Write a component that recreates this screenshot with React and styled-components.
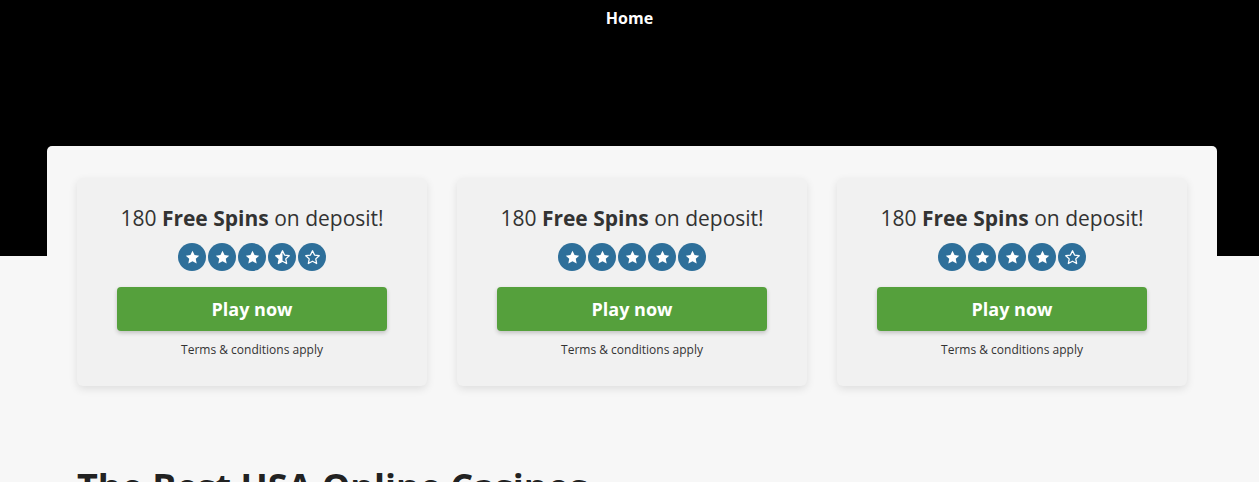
import React from 'react'
import styled, { createGlobalStyle } from 'styled-components'

const GlobalStyle = createGlobalStyle`
  body {
    margin: 0;
    background: #f7f7f7;
    font-family: "Open Sans", "Noto Sans", Arial, sans-serif;
    color: #333;
  }
`

const Hero = styled.header`
  background: #000;
  height: 256px;
`

const Nav = styled.nav`
  display: flex;
  justify-content: center;
  padding-top: 8px;
`

const NavLink = styled.a`
  color: #fff;
  font-weight: 700;
  font-size: 16px;
  line-height: 20px;
  text-decoration: none;
`

const Panel = styled.main`
  box-sizing: border-box;
  width: 1170px;
  margin: -110px 0 0 47px;
  padding: 32px 30px 0;
  background: #f7f7f7;
  border-radius: 5px 5px 0 0;
`

const Cards = styled.div`
  display: grid;
  grid-template-columns: repeat(3, 350px);
  gap: 30px;
`

const Card = styled.div`
  display: flex;
  flex-direction: column;
  align-items: center;
  padding: 28px 40px 28px;
  background: #f1f1f1;
  border-radius: 6px;
  box-shadow: 0 3px 8px rgba(0, 0, 0, 0.1);
`

const Offer = styled.p`
  margin: 0;
  font-size: 21px;
  line-height: 24px;
  color: #333;
  b {
    font-weight: 700;
  }
`

const Stars = styled.div`
  display: flex;
  gap: 2px;
  margin-top: 13px;
`

const StarBadge = styled.span`
  display: flex;
  align-items: center;
  justify-content: center;
  width: 28px;
  height: 28px;
  border-radius: 50%;
  background: #2e6f9a;
`

const PlayButton = styled.a`
  display: flex;
  align-items: center;
  justify-content: center;
  align-self: stretch;
  height: 44px;
  margin-top: 16px;
  background: #55a03c;
  border-radius: 4px;
  box-shadow: 0 2px 4px rgba(0, 0, 0, 0.2);
  color: #fff;
  font-weight: 700;
  font-size: 18px;
  text-decoration: none;
`

const Terms = styled.p`
  margin: 11px 0 0;
  font-size: 12px;
  line-height: 16px;
  color: #333;
`

const Heading = styled.h1`
  margin: 79px 0 0;
  font-size: 36px;
  line-height: 44px;
  font-weight: 700;
  color: #222;
`

const STAR = 'M12 2.5l2.9 6.1 6.6.8-4.9 4.5 1.3 6.6L12 17.2l-5.9 3.3 1.3-6.6-4.9-4.5 6.6-.8z'

const Star = ({ kind }) => (
  <StarBadge>
    <svg width="17" height="17" viewBox="0 0 24 24">
      <defs>
        <clipPath id="half-left">
          <rect x="0" y="0" width="12" height="24" />
        </clipPath>
      </defs>
      {kind === 'full' && <path d={STAR} fill="#fff" />}
      {kind !== 'full' && (
        <path d={STAR} fill="none" stroke="#fff" strokeWidth="1.8" strokeLinejoin="round" />
      )}
      {kind === 'half' && <path d={STAR} fill="#fff" clipPath="url(#half-left)" />}
    </svg>
  </StarBadge>
)

const ratings = [3.5, 5, 4]

const starKinds = (rating) =>
  [1, 2, 3, 4, 5].map((n) => (rating >= n ? 'full' : rating >= n - 0.5 ? 'half' : 'empty'))

export default function App() {
  return (
    <>
      <GlobalStyle />
      <Hero>
        <Nav>
          <NavLink href="#">Home</NavLink>
        </Nav>
      </Hero>
      <Panel>
        <Cards>
          {ratings.map((r, i) => (
            <Card key={i}>
              <Offer>
                180 <b>Free Spins</b> on deposit!
              </Offer>
              <Stars>
                {starKinds(r).map((k, j) => (
                  <Star key={j} kind={k} />
                ))}
              </Stars>
              <PlayButton href="#">Play now</PlayButton>
              <Terms>Terms &amp; conditions apply</Terms>
            </Card>
          ))}
        </Cards>
        <Heading>The Best USA Online Casinos</Heading>
      </Panel>
    </>
  )
}
